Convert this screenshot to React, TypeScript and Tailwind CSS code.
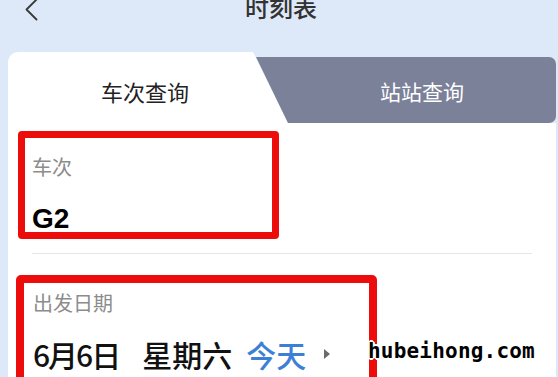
import React from "react";

export default function App() {
  return (
    <div className="relative w-[558px] h-[377px] overflow-hidden bg-[#dde9f8] flex flex-col font-['Noto_Sans_CJK_SC','Noto_Sans',sans-serif]">
      {/* header */}
      <div className="grid grid-cols-[1fr_auto_1fr] items-center h-[34px] -mt-[10px] shrink-0">
        <div className="pl-[24px] pt-[5px]">
          <svg width="14" height="24" viewBox="0 0 14 24" fill="none">
            <path d="M12.5 1.5 L2.5 11.5 L12.5 21.5" stroke="#3a3a3a" strokeWidth="1.8" strokeLinecap="round" strokeLinejoin="round" />
          </svg>
        </div>
        <div className="pl-[4px] text-[24px] leading-[24px] font-medium text-[#333]">时刻表</div>
        <div />
      </div>

      {/* tabs */}
      <div className="flex ml-[8px] w-[548px] h-[71px] mt-[28px] shrink-0">
        <div className="w-[280px] h-full shrink-0 bg-white rounded-tl-[10px] [clip-path:polygon(0_0,245px_0,280px_100%,0_100%)] flex items-center justify-center pr-[6px] pt-[7px] text-[22px] leading-[22px] text-[#222]">
          车次查询
        </div>
        <div className="w-[300px] h-[66px] shrink-0 -ml-[32px] mt-[5px] bg-[#7a8199] rounded-r-[7px] [clip-path:polygon(0_0,100%_0,100%_100%,32px_100%)] flex items-center justify-center pl-[32px] pt-[2px] text-[21px] leading-[21px] text-white">
          站站查询
        </div>
      </div>

      {/* card body */}
      <div className="ml-[8px] w-[548px] flex-1 bg-white pl-[10px] pt-[8px] flex flex-col">
        <div className="w-[261px] h-[108px] shrink-0 border-[7px] border-[#ec0c0c] rounded-[4px] pl-[7px] flex flex-col">
          <div className="mt-[19px] text-[20px] leading-[20px] text-[#8c8c8c]">车次</div>
          <div className="mt-[28px] text-[28px] leading-[28px] font-bold text-black font-['Liberation_Sans',Arial,sans-serif]">G2</div>
        </div>

        <div className="mt-[14px] ml-[14px] w-[500px] h-px bg-[#e6e6e6] shrink-0" />

        <div className="mt-[21px] -ml-[2px] w-[361px] h-[130px] shrink-0 border-[8px] border-[#ec0c0c] rounded-[5px] pl-[9px] flex flex-col">
          <div className="mt-[10px] text-[20px] leading-[20px] text-[#8c8c8c]">出发日期</div>
          <div className="mt-[26px] flex items-center text-[30px] leading-[30px] font-medium text-[#111]">
            <span className="tracking-[-2px]">6月6日</span>
            <span className="ml-[23px]">星期六</span>
            <span className="ml-[14px] text-[#3d7fd6]">今天</span>
            <svg className="ml-[18px]" width="6" height="10" viewBox="0 0 6 10">
              <polygon points="0,0 6,5 0,10" fill="#6b6b6b" />
            </svg>
          </div>
        </div>
      </div>

      {/* watermark */}
      <div className="absolute left-[368px] top-[339px] font-['DejaVu_Sans_Mono',monospace] font-bold text-[21px] leading-[24px] tracking-[0.2px] text-black [text-shadow:2px_0_0_#fff,-2px_0_0_#fff,0_2px_0_#fff,0_-2px_0_#fff,1px_1px_0_#fff,-1px_-1px_0_#fff,1px_-1px_0_#fff,-1px_1px_0_#fff]">
        hubeihong.com
      </div>
    </div>
  );
}
